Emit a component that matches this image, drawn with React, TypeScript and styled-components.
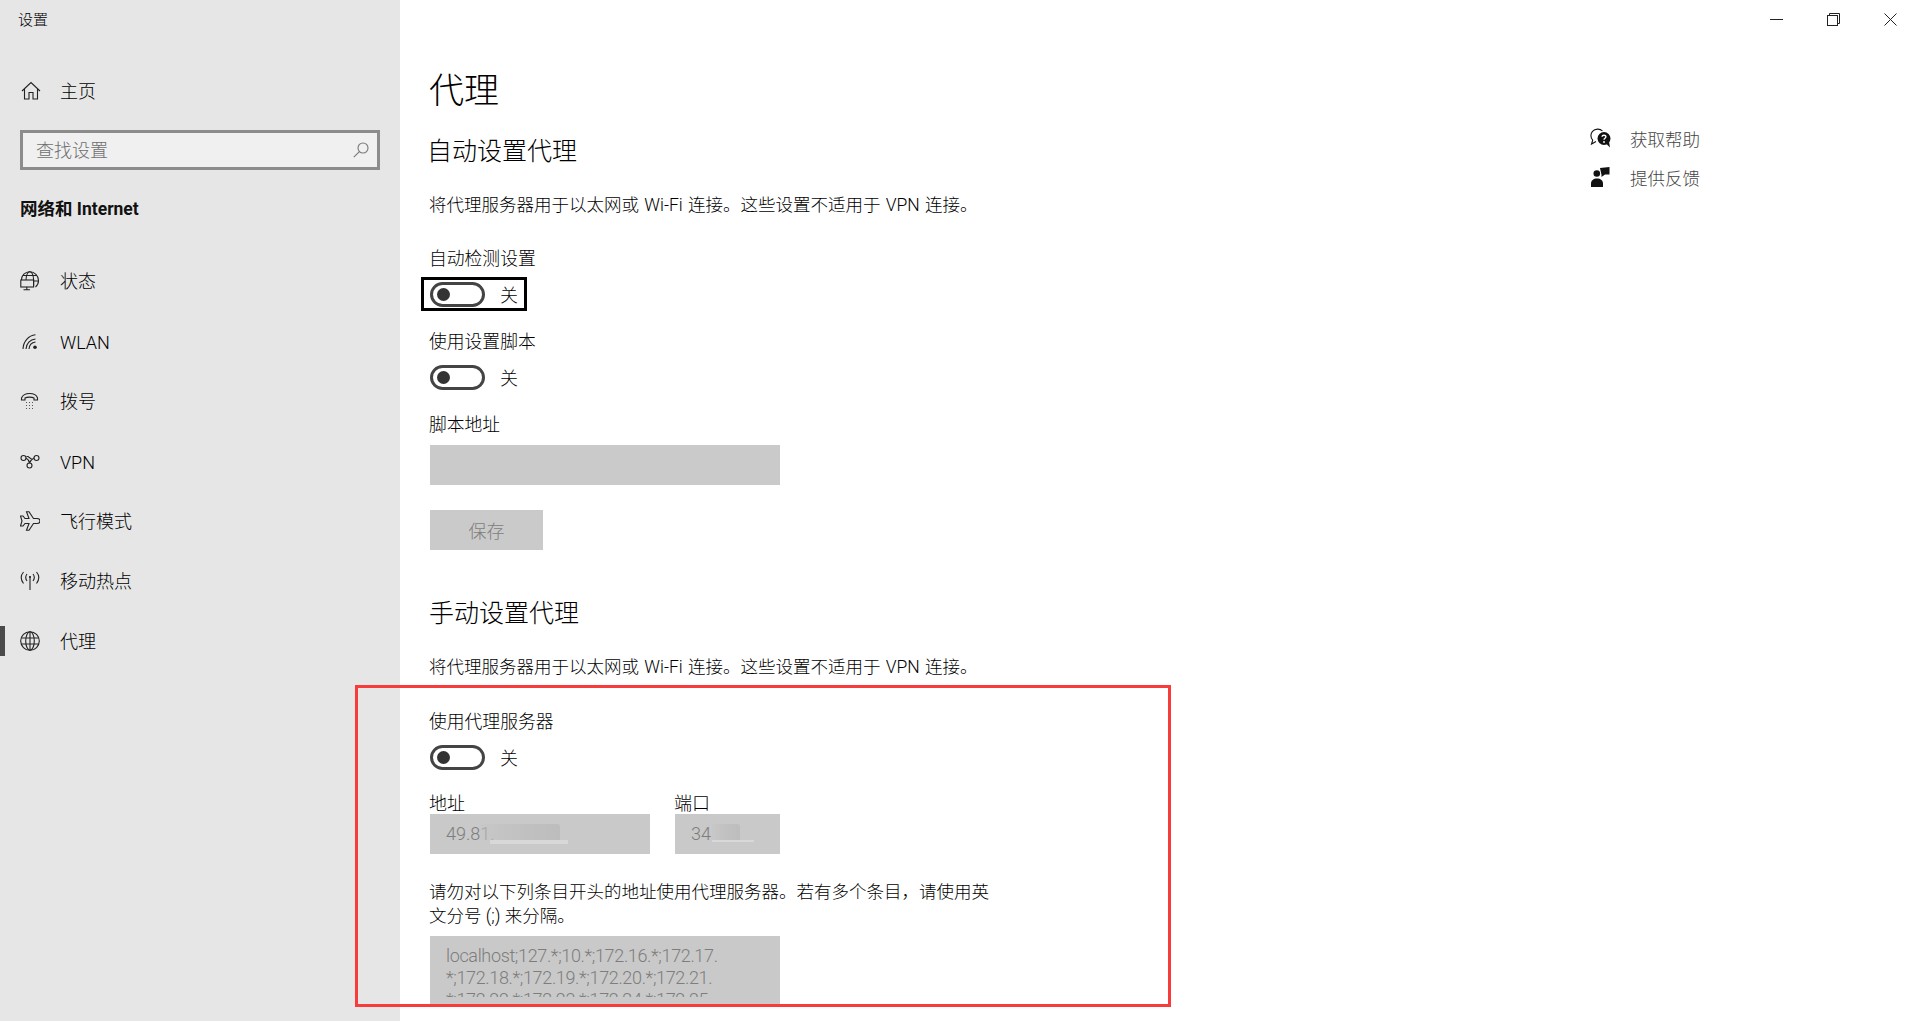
import React from 'react';
import styled, { createGlobalStyle } from 'styled-components';

const FONT = 'Roboto, "Noto Sans CJK SC", sans-serif';

const GlobalStyle = createGlobalStyle`
  html, body {
    margin: 0;
    padding: 0;
    height: 100%;
    overflow: hidden;
    background: #fff;
  }
  body {
    font-family: ${FONT};
    font-weight: 300;
    color: #000;
  }
  * {
    box-sizing: border-box;
  }
`;

const Icon: React.FC<{ children: React.ReactNode }> = ({ children }) => (
  <svg width={20} height={20} viewBox="0 0 20 20" fill="none" stroke="#222" strokeWidth="1.1">
    {children}
  </svg>
);

const navItems: { label: string; icon: React.ReactNode; active?: boolean; latin?: boolean }[] = [
  {
    label: '状态',
    icon: (
      <Icon>
        <path d="M1.500 9C1.500 4.500 5 .8 9.800.8s8.700 3.700 8.700 8.700c0 2.800-1.200 5-3 6.500" />
        <path d="M6 9C6.300 4 7.800.8 9.800.8s3.500 3.200 3.800 8.200v6M2.800 4.500h14M13.600 10h4.700" />
        <rect x=".8" y="9" width="12.800" height="7" />
        <path d="M3.500 18.800h6.500M6.800 16v2.800" />
      </Icon>
    ),
  },
  {
    label: 'WLAN',
    latin: true,
    icon: (
      <Icon>
        <path d="M3 18C3.300 10.500 8.500 4.500 15.500 3.800M6 18c.3-5.500 4-9.500 9.500-10M9 18c.3-3.800 3-6.500 6.500-7" />
        <circle cx="15" cy="16.300" r="1.800" fill="#222" stroke="none" />
      </Icon>
    ),
  },
  {
    label: '拨号',
    icon: (
      <Icon>
        <path d="M1.500 9V7C3 3.500 6 2.500 9.500 2.500S16.500 3.500 17.500 7v2h-3.500V7C12 5.800 7 5.800 5 7v2z" />
        <path
          d="M6 11.500h1M9 11.500h1M12 11.500h1M6 14.500h1M9 14.500h1M12 14.500h1M6 17.500h1M9 17.500h1M12 17.500h1"
          stroke="#555"
        />
      </Icon>
    ),
  },
  {
    label: 'VPN',
    latin: true,
    icon: (
      <Icon>
        <circle cx="3.500" cy="7" r="2.500" />
        <circle cx="16.500" cy="7" r="2.500" />
        <circle cx="9.500" cy="14.500" r="2.500" />
        <path d="M6 7c2 1 3 3 3.500 5M14 7c-2 1-3.500 3-4.500 5M6.500 5.500h1.500l4 3" />
      </Icon>
    ),
  },
  {
    label: '飞行模式',
    icon: (
      <Icon>
        <path d="M6.500.8h2.500l4.500 6.700h3.500c2 0 3 1.200 3 2.500s-1 2.500-3 2.500h-3.500L9 19.200H6.500L9 12.500H5L3 15H.5L2 10 .5 5H3l2 2.500h4z" />
      </Icon>
    ),
  },
  {
    label: '移动热点',
    icon: (
      <Icon>
        <path d="M10 5v14" />
        <circle cx="10" cy="6" r="1" fill="#222" stroke="none" />
        <path d="M7 3C5.500 5 5.500 8 7 10M13 3c1.500 2 1.500 5 0 7M3.500 1C.5 4.500.5 8.500 3.500 12.500M16.500 1c3 3.500 3 7.500 0 11.500" />
      </Icon>
    ),
  },
  {
    label: '代理',
    active: true,
    icon: (
      <Icon>
        <circle cx="10" cy="10" r="9.300" />
        <ellipse cx="10" cy="10" rx="4.300" ry="9.300" />
        <path d="M10 .7v18.600M1 7h18M1 13h18" />
      </Icon>
    ),
  },
];

const Toggle: React.FC<{ focused?: boolean }> = ({ focused }) => (
  <ToggleRow $focused={focused}>
    <ToggleTrack>
      <ToggleKnob />
    </ToggleTrack>
    关
  </ToggleRow>
);

export default function App() {
  return (
    <Page>
      <GlobalStyle />
      <Sidebar>
        <WindowTitle>设置</WindowTitle>
        <NavRow>
          <IconSlot $offset={1}>
            <Icon>
              <path d="M1 10 10 1.500 19 10M3.500 8v10h4.500v-6.500h4V18h4.500V8" />
            </Icon>
          </IconSlot>
          <NavLabel>主页</NavLabel>
        </NavRow>
        <SearchBox>
          <Placeholder>查找设置</Placeholder>
          <svg width="16" height="16" viewBox="0 0 16 16" fill="none" stroke="#777" strokeWidth="1.1">
            <circle cx="10" cy="6" r="5" />
            <path d="M6.400 9.600.8 15.200" />
          </svg>
        </SearchBox>
        <GroupTitle>网络和 Internet</GroupTitle>
        <NavList>
          {navItems.map((item) => (
            <NavRow key={item.label} $active={item.active}>
              <IconSlot>{item.icon}</IconSlot>
              <NavLabel $latin={item.latin}>{item.label}</NavLabel>
            </NavRow>
          ))}
        </NavList>
      </Sidebar>

      <Main>
        <WindowControls>
          <svg width="13" height="13" viewBox="0 0 13 13" stroke="#222" strokeWidth="1">
            <path d="M0 6.500h13" />
          </svg>
          <svg width="13" height="13" viewBox="0 0 13 13" fill="none" stroke="#222" strokeWidth="1">
            <rect x=".5" y="2.500" width="10" height="10" />
            <path d="M2.500 2.500v-2h10v10h-2" />
          </svg>
          <svg width="13" height="13" viewBox="0 0 13 13" stroke="#222" strokeWidth="1">
            <path d="M.5.5l12 12M12.500.5l-12 12" />
          </svg>
        </WindowControls>

        <Content>
          <PageTitle>代理</PageTitle>
          <SectionTitle $shift={-2}>自动设置代理</SectionTitle>
          <Description>将代理服务器用于以太网或 Wi-Fi 连接。这些设置不适用于 VPN 连接。</Description>

          <Label $gap={29}>自动检测设置</Label>
          <Toggle focused />

          <Label $gap={18}>使用设置脚本</Label>
          <Toggle />

          <Label $gap={18}>脚本地址</Label>
          <ScriptInput />
          <SaveButton>保存</SaveButton>

          <SectionTitle $gap={47}>手动设置代理</SectionTitle>
          <Description>将代理服务器用于以太网或 Wi-Fi 连接。这些设置不适用于 VPN 连接。</Description>

          <Label $gap={30}>使用代理服务器</Label>
          <Toggle />

          <AddressRow>
            <Field>
              <FieldLabel>地址</FieldLabel>
              <FieldInput $width={220}>
                49.81.
                <Smear $left={50} $width={80} />
                <SmearEdge $left={60} $width={78} $height={4} />
              </FieldInput>
            </Field>
            <Field>
              <FieldLabel>端口</FieldLabel>
              <FieldInput $width={105}>
                34
                <Smear $left={37} $width={28} />
                <SmearEdge $left={37} $width={42} $height={2} />
              </FieldInput>
            </Field>
          </AddressRow>

          <Note>
            请勿对以下列条目开头的地址使用代理服务器。若有多个条目，请使用英文分号 (;) 来分隔。
          </Note>
          <ExceptionBox>
            <ExceptionText>
              localhost;127.*;10.*;172.16.*;172.17.
              <br />
              *;172.18.*;172.19.*;172.20.*;172.21.
              <br />
              *;172.22.*;172.23.*;172.24.*;172.25.
            </ExceptionText>
          </ExceptionBox>
        </Content>

        <HelpPanel>
          <HelpLink>
            <svg width="21" height="21" viewBox="0 0 21 21" fill="none" stroke="#111" strokeWidth="1.1">
              <path d="M6 13.500 1.500 16l1.200-3.800C.2 9.500.5 5.500 2.500 3.300 5 .5 10 .3 12.500 3" />
              <circle cx="14" cy="10.500" r="6.500" fill="#111" stroke="none" />
              <path d="m16 15.500 4 4-1-6z" fill="#111" stroke="none" />
              <path d="M12 8.800c.2-2.200 4-2 3.900 0 0 1.600-1.900 1.400-1.900 3" stroke="#fff" strokeWidth="1.400" />
              <circle cx="14" cy="14" r=".9" fill="#fff" stroke="none" />
            </svg>
            <HelpText>获取帮助</HelpText>
          </HelpLink>
          <HelpLink>
            <svg width="21" height="21" viewBox="0 0 21 21" fill="#111">
              <circle cx="6.800" cy="6.500" r="3.300" />
              <path d="M1 20v-3.500c0-3 2.500-5 6-5s6 2 6 5V20z" />
              <path d="M10 1 19.500 0v7.500H15L11.500 10V8z" />
            </svg>
            <HelpText>提供反馈</HelpText>
          </HelpLink>
        </HelpPanel>

        <ReviewFrame />
      </Main>
    </Page>
  );
}

const Page = styled.div`
  display: flex;
  width: 1912px;
  height: 1021px;
  overflow: hidden;
  background: #fff;
`;

const Sidebar = styled.aside`
  display: flex;
  flex-direction: column;
  flex: 0 0 400px;
  background: #e6e6e6;
`;

const WindowTitle = styled.div`
  height: 61px;
  padding-left: 18px;
  font-size: 15px;
  line-height: 40px;
`;

const NavList = styled.nav`
  display: flex;
  flex-direction: column;
  margin-top: 22px;
`;

const NavRow = styled.div<{ $active?: boolean }>`
  position: relative;
  display: flex;
  align-items: center;
  height: 60px;
  padding-left: 20px;
  font-size: 18px;

  &::before {
    content: '';
    display: ${({ $active }) => ($active ? 'block' : 'none')};
    position: absolute;
    left: 0;
    top: 15px;
    width: 5px;
    height: 30px;
    background: #4a4a4a;
  }
`;

const NavLabel = styled.span<{ $latin?: boolean }>`
  margin-top: ${({ $latin }) => ($latin ? 2 : -2)}px;
`;

const IconSlot = styled.span<{ $offset?: number }>`
  display: flex;
  width: 40px;
  padding-left: ${({ $offset }) => $offset ?? 0}px;
`;

const SearchBox = styled.div`
  display: flex;
  align-items: center;
  justify-content: space-between;
  width: 360px;
  height: 40px;
  margin: 9px 0 0 20px;
  padding: 0 8px 0 13px;
  border: 3px solid #8c8c8c;
  background: #f0f0f0;
`;

const Placeholder = styled.span`
  margin-top: -2px;
  font-size: 18px;
  color: #6e6e6e;
`;

const GroupTitle = styled.div`
  margin: 19px 0 0 20px;
  font-size: 17.5px;
  font-weight: 700;
  line-height: 40px;
  color: #111;
`;

const Main = styled.main`
  position: relative;
  flex: 1;
  display: flex;
`;

const WindowControls = styled.div`
  position: absolute;
  top: 13px;
  right: 15px;
  display: flex;
  gap: 44px;
`;

const Content = styled.div`
  flex: 0 0 auto;
  width: 1190px;
  padding: 72px 0 0 29px;
`;

const PageTitle = styled.h1`
  margin: 0;
  font-size: 35px;
  font-weight: 300;
  line-height: 40px;
`;

const SectionTitle = styled.h2<{ $gap?: number; $shift?: number }>`
  margin: ${({ $gap }) => $gap ?? 23}px 0 0 ${({ $shift }) => $shift ?? 0}px;
  font-size: 25px;
  font-weight: 300;
  line-height: 34px;
`;

const Description = styled.p`
  margin: 24px 0 0;
  font-size: 17.5px;
  line-height: 24px;
  word-spacing: 1px;
`;

const Label = styled.div<{ $gap: number }>`
  margin-top: ${({ $gap }) => $gap}px;
  font-size: 17.8px;
  line-height: 26px;
`;

const ToggleRow = styled.div<{ $focused?: boolean }>`
  display: flex;
  align-items: center;
  gap: 15px;
  width: 106px;
  height: 34px;
  margin: 5px 0 0 -8px;
  padding-left: 6px;
  border: 3px solid ${({ $focused }) => ($focused ? '#000' : 'transparent')};
  font-size: 18px;
`;

const ToggleTrack = styled.div`
  display: flex;
  align-items: center;
  flex: 0 0 55px;
  height: 25px;
  padding-left: 4px;
  border: 3px solid #444;
  border-radius: 13px;
`;

const ToggleKnob = styled.div`
  width: 13px;
  height: 13px;
  border-radius: 50%;
  background: #333;
`;

const ScriptInput = styled.div`
  width: 350px;
  height: 40px;
  margin: 7px 0 0 1px;
  background: #cacaca;
`;

const SaveButton = styled.div`
  display: flex;
  align-items: center;
  justify-content: center;
  width: 113px;
  height: 40px;
  margin: 25px 0 0 1px;
  background: #cacaca;
  font-size: 18px;
  color: #7d7d7d;
`;

const AddressRow = styled.div`
  display: flex;
  gap: 25px;
  margin: 18px 0 0 1px;
`;

const Field = styled.div`
  display: flex;
  flex-direction: column;
`;

const FieldLabel = styled.div`
  margin: 0 0 -2px -1px;
  font-size: 18px;
  line-height: 24px;
`;

const FieldInput = styled.div<{ $width: number }>`
  position: relative;
  width: ${({ $width }) => $width}px;
  height: 40px;
  padding-left: 16px;
  background: #c9c9c9;
  font-size: 18px;
  line-height: 39px;
  color: #7d7d7d;
`;

const Smear = styled.div<{ $left: number; $width: number }>`
  position: absolute;
  top: 10px;
  left: ${({ $left }) => $left}px;
  width: ${({ $width }) => $width}px;
  height: 16px;
  border-radius: 3px 3px 0 0;
  background: linear-gradient(90deg, rgba(198, 198, 198, 0.5), #c0c0c0 60%, #bdbdbd);
`;

const SmearEdge = styled.div<{ $left: number; $width: number; $height: number }>`
  position: absolute;
  top: 26px;
  left: ${({ $left }) => $left}px;
  width: ${({ $width }) => $width}px;
  height: ${({ $height }) => $height}px;
  background: #d8d8d8;
`;

const Note = styled.p`
  width: 565px;
  margin: 26px 0 0;
  font-size: 17.5px;
  line-height: 24px;
`;

const ExceptionBox = styled.div`
  width: 350px;
  height: 68px;
  margin: 8px 0 0 1px;
  padding: 9px 0 7px 16px;
  background: #c9c9c9;
`;

const ExceptionText = styled.div`
  height: 100%;
  overflow: hidden;
  font-size: 18px;
  line-height: 22px;
  letter-spacing: -0.35px;
  color: #7d7d7d;
  white-space: nowrap;
`;

const HelpPanel = styled.div`
  display: flex;
  flex-direction: column;
  gap: 9px;
  margin-top: 123px;
`;

const HelpLink = styled.div`
  display: flex;
  align-items: center;
  gap: 19px;
  height: 30px;
`;

const HelpText = styled.span`
  font-size: 17.5px;
  color: #444;
`;

const ReviewFrame = styled.div`
  position: absolute;
  top: 685px;
  left: -45px;
  width: 816px;
  height: 322px;
  border: 3px solid #f83c3c;
  pointer-events: none;
`;
